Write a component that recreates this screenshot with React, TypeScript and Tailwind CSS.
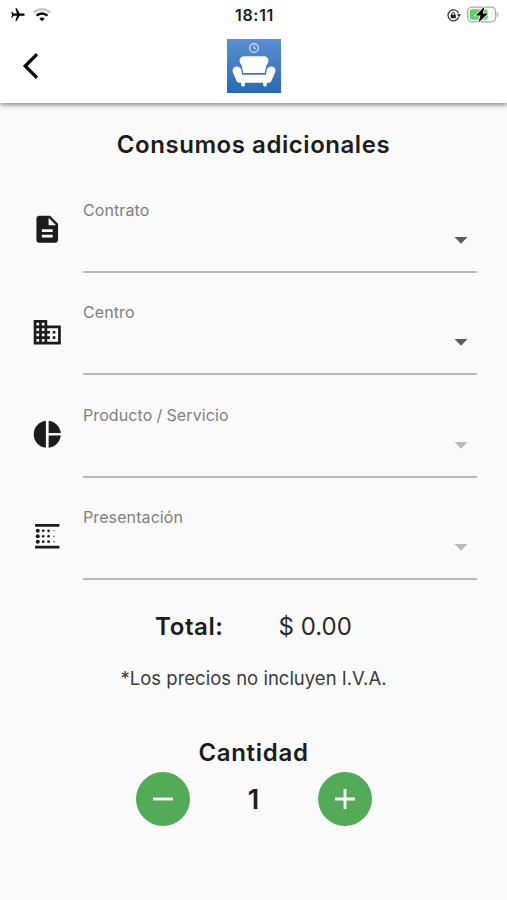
import { FC, ReactNode } from "react";

const StatusBar: FC = () => (
	<div className="flex h-[30px] items-center justify-between pr-2 pl-2.5">
		<div className="flex w-[160px] items-center gap-[7px]">
			<svg
				className="h-[18px] w-4"
				viewBox="0 0 24 24"
				preserveAspectRatio="none"
				fill="black"
			>
				<path
					transform="rotate(90 12 12)"
					d="M20 16v-2l-7-4.500V3.500c0-.83-.67-1.500-1.500-1.500S10 2.670 10 3.500V9.500L3 14v2l7-2.500V19l-2.500 1.500V22l4-1 4 1v-1.500L13 19v-5.500l7 2.500z"
				/>
			</svg>
			<svg className="h-[14px] w-[18px]" viewBox="0 0 18 14" fill="none">
				<path
					d="M.8 4.600C5.300.1 12.700.1 17.200 4.600"
					stroke="#c8c8c8"
					strokeWidth="2.300"
				/>
				<path
					d="M3.600 7.700C6.600 4.700 11.400 4.700 14.400 7.700"
					stroke="black"
					strokeWidth="2.500"
				/>
				<path d="M6.300 10.600c1.500-1.500 3.900-1.500 5.400 0L9 13.300z" fill="black" />
			</svg>
		</div>
		<span className="text-[16px] leading-none font-semibold tracking-[0.7px] text-[#1a1a1a]">
			18:11
		</span>
		<div className="flex w-[160px] items-center justify-end gap-[6px]">
			<svg className="size-[15px]" viewBox="0 0 15 15" fill="none">
				<path
					d="M12.600 9.300A5.500 5.500 0 1 1 12.600 5.300"
					stroke="#333"
					strokeWidth="1.200"
				/>
				<path d="M11 6.300h4L13 9.200z" fill="#222" />
				<rect x="4.800" y="6.700" width="5" height="3.600" rx=".6" fill="#222" />
				<path
					d="M5.900 7V5.800a1.400 1.400 0 0 1 2.800 0V7"
					stroke="#222"
					strokeWidth="1"
				/>
			</svg>
			<svg className="h-[18px] w-8" viewBox="0 0 32 18" fill="none">
				<rect
					x=".7"
					y="1.200"
					width="28"
					height="14.600"
					rx="4.200"
					stroke="#aaa"
					strokeWidth="1.300"
				/>
				<path d="M30.200 6c1.600.8 1.600 4.200 0 5z" fill="#aaa" />
				<rect x="2.700" y="3.200" width="18" height="10.600" rx="2.300" fill="#5fd068" />
				<path
					d="M17.500.7 8.500 9.500h5l-2 7L21 7.500h-5.200z"
					fill="black"
					stroke="white"
					strokeWidth="1.600"
					paintOrder="stroke"
				/>
			</svg>
		</div>
	</div>
);

const Logo: FC = () => (
	<svg className="size-[54px]" viewBox="0 0 54 54">
		<defs>
			<linearGradient id="logo-bg" x1="0" y1="0" x2="0" y2="1">
				<stop offset="0" stopColor="#5b90d2" />
				<stop offset="1" stopColor="#2769b4" />
			</linearGradient>
		</defs>
		<rect width="54" height="54" fill="url(#logo-bg)" />
		<circle
			cx="27"
			cy="9"
			r="4.300"
			fill="none"
			stroke="#d5e5f7"
			strokeWidth="1.200"
		/>
		<path d="M27 6.500V9.300h2" fill="none" stroke="#d5e5f7" strokeWidth="1" />
		<path
			fill="white"
			d="M17.500 17.300h19c3 0 5 2 5 4.500 0 2.300-2 3.500-2.400 5.700L37.800 34H16.200l-1.300-6.500c-.4-2.200-2.400-3.400-2.400-5.700 0-2.500 2-4.500 5-4.500z"
		/>
		<path
			fill="white"
			d="M9 27.500c2.600-.4 4.700 1 5.200 3.500l1 4.700h23.600l1-4.700c.5-2.500 2.600-3.900 5.200-3.500 3 .5 4.200 3.600 3 6.300l-3.500 8c-.6 1.400-1.800 2-3.300 2h-1.400V46c0 2-3.600 2-3.600 0v-2.200H17.800V46c0 2-3.600 2-3.600 0v-2.200h-1.400c-1.500 0-2.700-.6-3.300-2l-3.500-8C4.800 31.100 6 28 9 27.500z"
		/>
	</svg>
);

const Icon: FC<{ children: ReactNode }> = ({ children }) => (
	<svg className="size-[32.500px] fill-[#1c1c1c]" viewBox="0 0 24 24">
		{children}
	</svg>
);

const DocumentIcon: FC = () => (
	<Icon>
		<path d="M14 2H6c-1.100 0-1.990.9-1.990 2L4 20c0 1.100.89 2 1.990 2H18c1.100 0 2-.9 2-2V8l-6-6zm2 16H8v-2h8v2zm0-4H8v-2h8v2zm-3-5V3.500L18.500 9H13z" />
	</Icon>
);

const BusinessIcon: FC = () => (
	<Icon>
		<path d="M12 7V3H2v18h20V7H12zM6 19H4v-2h2v2zm0-4H4v-2h2v2zm0-4H4V9h2v2zm0-4H4V5h2v2zm4 12H8v-2h2v2zm0-4H8v-2h2v2zm0-4H8V9h2v2zm0-4H8V5h2v2zm10 12h-8v-2h2v-2h-2v-2h2v-2h-2V9h8v10zm-2-8h-2v2h2v-2zm0 4h-2v2h2v-2z" />
	</Icon>
);

const PieIcon: FC = () => (
	<Icon>
		<path d="M11 2v20c-5.070-.5-9-4.790-9-10s3.930-9.500 9-10zm2.030 0v8.990H22c-.47-4.740-4.240-8.520-8.970-8.990zm0 11.010V22c4.740-.47 8.500-4.250 8.970-8.990h-8.970z" />
	</Icon>
);

const BlurIcon: FC = () => (
	<Icon>
		<path d="M3 3h18v2H3zM3 19h18v2H3z" />
		{[8, 12, 16].map((y) => (
			<g key={y}>
				<circle cx="5" cy={y} r="1.500" />
				<circle cx="9" cy={y} r="1" />
				<circle cx="13" cy={y} r="1" />
				<circle cx="17" cy={y} r=".5" />
			</g>
		))}
	</Icon>
);

const fields = [
	{ label: "Contrato", icon: <DocumentIcon />, enabled: true },
	{ label: "Centro", icon: <BusinessIcon />, enabled: true },
	{ label: "Producto / Servicio", icon: <PieIcon />, enabled: false },
	{ label: "Presentación", icon: <BlurIcon />, enabled: false },
];

const SelectField: FC<{
	label: string;
	icon: ReactNode;
	enabled: boolean;
}> = ({ label, icon, enabled }) => (
	<div className="flex h-[102.400px] pr-[30px] pl-[30.500px]">
		<div className="w-[52.500px] pt-[42.800px]">{icon}</div>
		<div className="flex flex-1 flex-col border-b-2 border-[#bababa] pt-[29.500px]">
			<label className="text-[16px] leading-5 tracking-[0.1px] text-[#808080] [word-spacing:-0.5px]">
				{label}
			</label>
			<svg
				className={
					"mt-[17px] mr-[9px] h-[7px] w-[14px] self-end " +
					(enabled ? "fill-[#5c5c5c]" : "fill-[#bababa]")
				}
				viewBox="0 0 14 7"
			>
				<path d="M.5 0h13L7 6.700z" />
			</svg>
		</div>
	</div>
);

const RoundButton: FC<{ label: string; path: string }> = ({ label, path }) => (
	<button
		aria-label={label}
		className="flex size-[54px] items-center justify-center rounded-full bg-[#53ab57]"
	>
		<svg
			className="size-5"
			viewBox="0 0 20 20"
			stroke="white"
			strokeWidth="2.800"
		>
			<path d={path} />
		</svg>
	</button>
);

export default function App() {
	return (
		<div className="flex h-[900px] w-[507px] flex-col overflow-hidden bg-[#fafafa] font-['Inter',sans-serif] text-[#1c1c1c]">
			<header className="h-[103px] bg-white shadow-[0_2px_5px_rgba(0,0,0,0.45)]">
				<StatusBar />
				<div className="grid grid-cols-3 pt-[8.500px]">
					<button aria-label="Atrás" className="pl-[22px]">
						<svg
							className="h-7 w-4"
							viewBox="0 0 16 28"
							fill="none"
							stroke="black"
							strokeWidth="3.200"
						>
							<path d="M15 2.200 3.200 14 15 25.800" />
						</svg>
					</button>
					<div className="flex justify-center">
						<Logo />
					</div>
				</div>
			</header>
			<main className="flex flex-col">
				<h1 className="pt-[27px] text-center text-[24px] leading-[30px] font-semibold tracking-[0.55px]">
					Consumos adicionales
				</h1>
				<div className="pt-[10.500px]">
					{fields.map((field) => (
						<SelectField key={field.label} {...field} />
					))}
				</div>
				<div className="flex justify-center gap-[55px] pt-[31.500px] text-[24px] leading-[30px]">
					<span className="font-semibold tracking-[0.6px]">Total:</span>
					<span className="text-[#2a2a2a]">$ 0.00</span>
				</div>
				<p className="pt-6 text-center text-[18.5px] leading-6 text-[#3a3a3a]">
					*Los precios no incluyen I.V.A.
				</p>
				<h2 className="pt-[48px] text-center text-[24px] leading-[30px] font-semibold tracking-[0.7px]">
					Cantidad
				</h2>
				<div className="flex items-center justify-center pt-[4.500px]">
					<RoundButton label="Menos" path="M0 10h20" />
					<span className="w-[128px] text-center text-[27px] leading-none font-semibold">
						1
					</span>
					<RoundButton label="Más" path="M0 10h20M10 0v20" />
				</div>
			</main>
		</div>
	);
}
